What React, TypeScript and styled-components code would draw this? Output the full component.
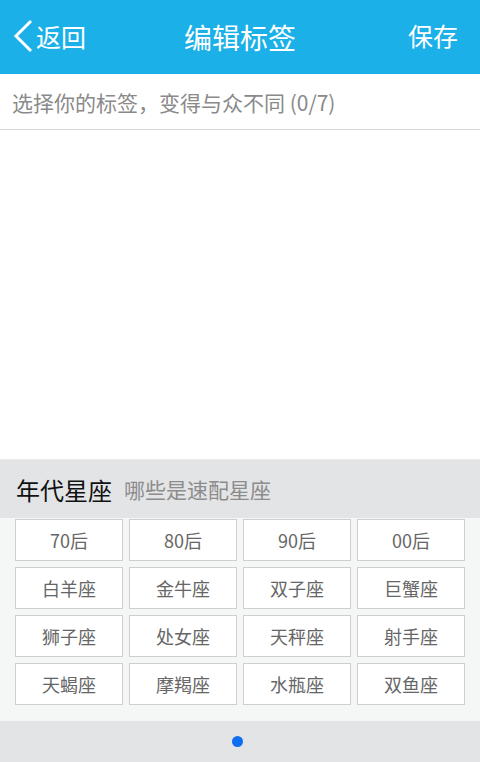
import React from 'react'
import styled, { createGlobalStyle } from 'styled-components'

const Global = createGlobalStyle`
  html, body {
    margin: 0;
    padding: 0;
    background: #ffffff;
  }
  body {
    font-family: 'Noto Sans CJK SC', 'Noto Sans', sans-serif;
  }
`

const Page = styled.div`
  width: 480px;
  height: 762px;
  display: flex;
  flex-direction: column;
  overflow: hidden;
`

const Header = styled.header`
  height: 74px;
  flex-shrink: 0;
  background: #1cb0e8;
  display: flex;
  align-items: center;
  justify-content: space-between;
  color: #ffffff;
  position: relative;
`

const Back = styled.div`
  display: flex;
  align-items: center;
  padding-left: 12px;
  font-size: 25px;
  gap: 2px;
  margin-top: -2px;
`

const Title = styled.h1`
  position: absolute;
  left: 0;
  right: 0;
  text-align: center;
  margin: 0;
  font-size: 28px;
  font-weight: 400;
  pointer-events: none;
`

const Save = styled.div`
  padding-right: 22px;
  font-size: 25px;
  margin-top: -4px;
`

const InputRow = styled.div`
  height: 55px;
  flex-shrink: 0;
  border-bottom: 1px solid #d8d8d8;
  display: flex;
  align-items: center;
  padding-left: 12px;
  font-size: 21px;
  color: #8a8a8a;
`

const Blank = styled.div`
  flex: 1;
`

const SectionHead = styled.div`
  height: 58px;
  flex-shrink: 0;
  background: #e3e4e6;
  border-top: 1px solid #ececec;
  display: flex;
  align-items: center;
  padding-left: 16px;
  gap: 12px;
`

const SectionTitle = styled.span`
  font-size: 24px;
  color: #111111;
`

const SectionHint = styled.span`
  font-size: 21px;
  color: #8c8c8c;
`

const Grid = styled.div`
  flex-shrink: 0;
  background: #f5f6f6;
  display: grid;
  grid-template-columns: repeat(4, 108px);
  grid-auto-rows: 42px;
  gap: 6px;
  padding: 1px 15px 16px;
`

const Tag = styled.button`
  box-sizing: border-box;
  background: #ffffff;
  border: 1px solid #cfcfcf;
  font-family: inherit;
  font-size: 18px;
  color: #666666;
  padding: 0;
  display: flex;
  align-items: center;
  justify-content: center;
`

const Footer = styled.div`
  height: 41px;
  flex-shrink: 0;
  background: #e3e4e6;
  display: flex;
  align-items: center;
  justify-content: center;
`

const Dot = styled.span`
  width: 11px;
  height: 11px;
  border-radius: 50%;
  background: #0d6ef2;
  margin-left: -6px;
`

const tags = [
  '70后', '80后', '90后', '00后',
  '白羊座', '金牛座', '双子座', '巨蟹座',
  '狮子座', '处女座', '天秤座', '射手座',
  '天蝎座', '摩羯座', '水瓶座', '双鱼座',
]

export default function App() {
  return (
    <Page>
      <Global />
      <Header>
        <Back>
          <svg width="22" height="34" viewBox="0 0 22 34">
            <path d="M19 2 L4 17 L19 32" fill="none" stroke="#ffffff" strokeWidth="3" />
          </svg>
          <span>返回</span>
        </Back>
        <Title>编辑标签</Title>
        <Save>保存</Save>
      </Header>
      <InputRow>选择你的标签，变得与众不同 (0/7)</InputRow>
      <Blank />
      <SectionHead>
        <SectionTitle>年代星座</SectionTitle>
        <SectionHint>哪些是速配星座</SectionHint>
      </SectionHead>
      <Grid>
        {tags.map((t) => (
          <Tag key={t}>{t}</Tag>
        ))}
      </Grid>
      <Footer>
        <Dot />
      </Footer>
    </Page>
  )
}
